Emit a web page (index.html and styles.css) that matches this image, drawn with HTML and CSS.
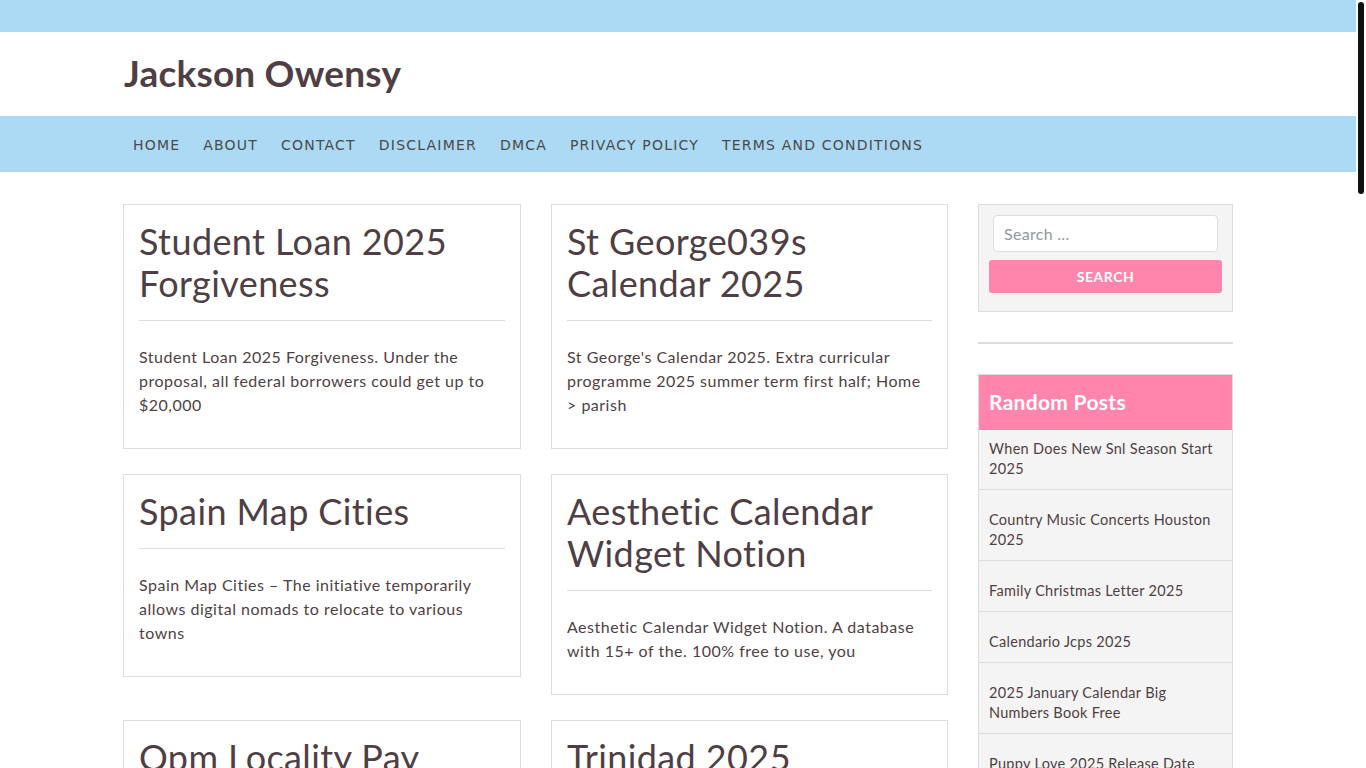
FILE: index.html
```html
<!DOCTYPE html>
<html lang="en">
<head>
<meta charset="utf-8">
<title>Jackson Owensy</title>
<link rel="stylesheet" href="styles.css">
</head>
<body>
<div class="page">
<div class="topbar"></div>
<header class="site-header">
  <div class="container">
    <h1 class="site-title">Jackson Owensy</h1>
  </div>
</header>
<nav class="main-nav">
  <div class="container">
    <ul class="menu">
      <li><a href="#">HOME</a></li>
      <li><a href="#">ABOUT</a></li>
      <li><a href="#">CONTACT</a></li>
      <li><a href="#">DISCLAIMER</a></li>
      <li><a href="#">DMCA</a></li>
      <li><a href="#">PRIVACY POLICY</a></li>
      <li><a href="#">TERMS AND CONDITIONS</a></li>
    </ul>
  </div>
</nav>
<div class="container content">
  <main class="posts">
    <article class="card">
      <h2 class="card-title">Student Loan 2025 Forgiveness</h2>
      <p class="card-text">Student Loan 2025 Forgiveness. Under the proposal, all federal borrowers could get up to $20,000</p>
    </article>
    <article class="card">
      <h2 class="card-title">St George039s Calendar 2025</h2>
      <p class="card-text">St George's Calendar 2025. Extra curricular programme 2025 summer term first half; Home &gt; parish</p>
    </article>
    <article class="card">
      <h2 class="card-title">Spain Map Cities</h2>
      <p class="card-text">Spain Map Cities – The initiative temporarily allows digital nomads to relocate to various towns</p>
    </article>
    <article class="card">
      <h2 class="card-title">Aesthetic Calendar Widget Notion</h2>
      <p class="card-text">Aesthetic Calendar Widget Notion. A database with 15+ of the. 100% free to use, you</p>
    </article>
    <article class="card">
      <h2 class="card-title">Opm Locality Pay 2025</h2>
      <p class="card-text">Opm Locality Pay 2025. The locality pay tables for federal employees are updated each year</p>
    </article>
    <article class="card">
      <h2 class="card-title">Trinidad 2025 Calendar</h2>
      <p class="card-text">Trinidad 2025 Calendar. Public holidays and festivals in Trinidad and Tobago for the year</p>
    </article>
    <article class="card">
      <h2 class="card-title">Printable Calendar 2025 Monthly</h2>
      <p class="card-text">Printable Calendar 2025 Monthly. Free monthly calendars you can download and print</p>
    </article>
    <article class="card">
      <h2 class="card-title">Nfl Draft 2025 Order</h2>
      <p class="card-text">Nfl Draft 2025 Order. The full first round order of the upcoming draft</p>
    </article>
    <article class="card">
      <h2 class="card-title">Easter Date 2025</h2>
      <p class="card-text">Easter Date 2025. When is Easter Sunday this year and how is it calculated</p>
    </article>
    <article class="card">
      <h2 class="card-title">School Holidays 2025 Uk</h2>
      <p class="card-text">School Holidays 2025 Uk. Term dates for schools across England, Scotland and Wales</p>
    </article>
    <article class="card">
      <h2 class="card-title">Chinese New Year 2025 Animal</h2>
      <p class="card-text">Chinese New Year 2025 Animal. The year of the snake begins on January 29</p>
    </article>
    <article class="card">
      <h2 class="card-title">Fiscal Year 2025 Calendar</h2>
      <p class="card-text">Fiscal Year 2025 Calendar. Plan your budget with the fiscal year dates</p>
    </article>
  </main>
  <aside class="sidebar">
    <section class="widget search-widget">
      <form class="search-form">
        <input class="search-field" type="search" placeholder="Search …">
        <button class="search-submit" type="button">SEARCH</button>
      </form>
    </section>
    <hr class="sidebar-rule">
    <section class="widget posts-widget">
      <h3 class="widget-title">Random Posts</h3>
      <ul class="post-list">
        <li><a href="#">When Does New Snl Season Start 2025</a></li>
        <li><a href="#">Country Music Concerts Houston 2025</a></li>
        <li><a href="#">Family Christmas Letter 2025</a></li>
        <li><a href="#">Calendario Jcps 2025</a></li>
        <li><a href="#">2025 January Calendar Big Numbers Book Free</a></li>
        <li><a href="#">Puppy Love 2025 Release Date</a></li>
        <li><a href="#">Lunar Calendar 2025 Printable</a></li>
        <li><a href="#">Ramadan 2025 Start Date</a></li>
      </ul>
    </section>
  </aside>
</div>
<footer class="site-footer">
  <div class="container">Copyright © Jackson Owensy</div>
</footer>
</div>
<div class="scroll-track"><div class="scroll-thumb"></div></div>
</body>
</html>
```
FILE: styles.css
```css
html::-webkit-scrollbar { display: none; }
html { scrollbar-width: none; }
* { box-sizing: border-box; }
body {
  margin: 0;
  font-family: Lato, "Open Sans", sans-serif;
  color: #4f3f45;
  background: #fff;
}
a { color: inherit; text-decoration: none; }
.page {
  width: 1356px;
}
.scroll-track {
  position: fixed;
  top: 0;
  right: 0;
  width: 10px;
  height: 100vh;
  background: #fff;
}
.scroll-thumb {
  margin: 2px 0 0 2px;
  width: 6px;
  height: 192px;
  border-radius: 3px;
  background: #111;
}
.container {
  width: 1110px;
  margin: 0 auto;
}
.topbar {
  height: 32px;
  background: #acd9f3;
}
.site-header {
  height: 84px;
  display: flex;
  align-items: center;
}
.site-title {
  margin: 0 0 4px 1px;
  font-size: 37px;
  font-weight: 700;
  line-height: 1;
  color: #4f3f45;
  letter-spacing: 0.2px;
}
.main-nav {
  background: #acd9f3;
  height: 56px;
}
.menu {
  list-style: none;
  margin: 0;
  padding: 0;
  display: flex;
  height: 56px;
  align-items: center;
}
.menu a {
  display: block;
  padding: 0 10px;
  font-family: "DejaVu Sans", sans-serif;
  font-size: 14px;
  letter-spacing: 1.2px;
  color: #4a4a4a;
  line-height: 58px;
  padding-top: 2px;
}
.menu li + li a { margin-left: 3px; }
.content {
  display: flex;
  gap: 30px;
  align-items: flex-start;
  padding-top: 32px;
}
.posts {
  width: 825px;
  display: grid;
  grid-template-columns: 398px 397px;
  column-gap: 30px;
  row-gap: 25px;
  align-items: start;
}
.card {
  border: 1px solid #dddddd;
  padding: 15px 15px 31px;
}
.card-title {
  margin: 0;
  font-size: 36px;
  font-weight: 400;
  line-height: 42px;
  letter-spacing: 0.4px;
  color: #4f3f45;
  padding-bottom: 16px;
  border-bottom: 1px solid #dddddd;
}
.card-text {
  margin: 24px 0 0;
  font-size: 16px;
  line-height: 24px;
  letter-spacing: 0.5px;
  color: #4f3f45;
}
.sidebar {
  width: 255px;
}
.widget {
  border: 1px solid #dddddd;
  background: #f4f4f4;
}
.search-widget {
  padding: 10px 10px 18px;
}
.search-form {
  display: flex;
  flex-direction: column;
  gap: 8px;
}
.search-field {
  margin: 0 4px;
  height: 37px;
  border: 1px solid #dddddd;
  border-radius: 4px;
  background: #fff;
  padding: 0 10px;
  font-family: Lato, sans-serif;
  font-size: 16px;
  letter-spacing: 0.3px;
  color: #4f3f45;
  outline: none;
}
.search-field::placeholder { color: #8d9a9e; }
.search-submit {
  height: 33px;
  border: 0;
  border-radius: 3px;
  background: #ff85ad;
  color: #fff;
  font-family: Lato, sans-serif;
  font-size: 14px;
  font-weight: 700;
  letter-spacing: 0.5px;
}
.sidebar-rule {
  border: 0;
  border-top: 2px solid #dddddd;
  margin: 30px 0 30px;
}
.widget-title {
  margin: 0;
  background: #ff85ad;
  color: #fff;
  font-size: 21px;
  font-weight: 700;
  line-height: 54px;
  letter-spacing: 0.3px;
  padding: 0 10px 1px;
}
.post-list {
  list-style: none;
  margin: 0;
  padding: 0;
}
.post-list li {
  padding: 20px 10px 10px;
  border-bottom: 1px solid #dddddd;
  font-size: 14.5px;
  line-height: 20px;
  letter-spacing: 0.3px;
}
.post-list li:first-child { padding-top: 9px; }
.site-footer {
  margin-top: 40px;
  background: #acd9f3;
  padding: 20px 0;
  font-size: 14px;
}
```
